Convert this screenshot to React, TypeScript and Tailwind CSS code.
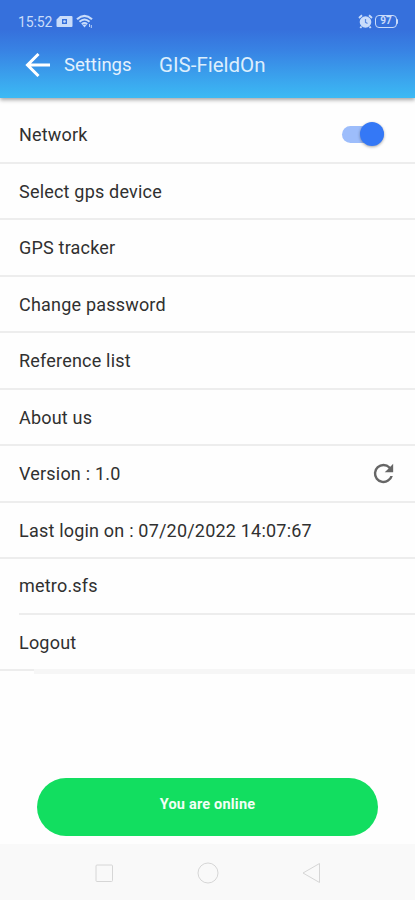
import React from "react";
import clsx from "clsx";

type Row = {
  label: string;
  inset?: boolean;
  last?: boolean;
  icon?: React.ReactNode;
};

const RefreshIcon = () => (
  <svg width="29" height="29" viewBox="0 0 24 24" fill="#666666">
    <path d="M17.65 6.35A7.96 7.96 0 0 0 12 4a8 8 0 1 0 7.73 10h-2.08A6 6 0 1 1 12 6c1.66 0 3.14.69 4.22 1.78L13 11h7V4l-2.35 2.35z" />
  </svg>
);

const rows: Row[] = [
  { label: "Select gps device" },
  { label: "GPS tracker" },
  { label: "Change password" },
  { label: "Reference list" },
  { label: "About us" },
  { label: "Version : 1.0", icon: <RefreshIcon /> },
  { label: "Last login on : 07/20/2022 14:07:67" },
  { label: "metro.sfs", inset: true },
  { label: "Logout", last: true },
];

function StatusBar() {
  return (
    <div className="flex h-[42px] items-center pl-[18px] pr-[17px] text-[#c9dcfa]">
      <span className="pt-px text-[14px] leading-none tracking-[-0.1px]">15:52</span>
      <svg className="ml-[4px]" width="17" height="13" viewBox="0 0 17 13">
        <path
          fill="currentColor"
          fillRule="evenodd"
          d="M4 1h11.500Q16.500 1 16.500 2v9q0 1-1 1h-14q-1 0-1-1V4.500zM6 4v5h5V4z"
        />
        <circle cx="8.500" cy="6.500" r="1.300" fill="currentColor" />
      </svg>
      <svg className="ml-[3px]" width="18" height="15" viewBox="0 0 18 15" fill="none" stroke="currentColor">
        <path d="M1 5.200Q8.500-1.600 16 5.200" strokeWidth="2.200" />
        <path d="M3.500 7.800Q8.500 3.200 13.500 7.800" strokeWidth="2" />
        <path d="M5.800 10.200Q8.500 7.900 11.200 10.200" strokeWidth="2" />
        <path d="M6.500 11l2 2.500L10.500 11q-2-1-4 0z" fill="currentColor" stroke="none" />
        <path d="M13.500 10v3M15.300 11v3" strokeWidth="0.900" />
      </svg>
      <svg className="ml-auto" width="15" height="15" viewBox="0 0 15 15" fill="none">
        <circle cx="7.500" cy="8" r="5.800" fill="currentColor" />
        <path d="M1 4l3-2.700M14 4l-3-2.700M3.500 12.500L2.300 14M11.500 12.500l1.200 1.500" stroke="currentColor" strokeWidth="1.900" />
        <path d="M7.500 5v3.300l2 1.200" stroke="#5c8ae3" strokeWidth="1.200" />
      </svg>
      <div className="ml-[2px] flex h-[13px] w-[22px] items-center justify-center rounded-[4px] border border-[#c9dcfa] text-[10px] leading-none font-bold">
        97
      </div>
      <div className="h-[5px] w-px rounded-r-sm bg-[#c9dcfa]" />
    </div>
  );
}

function Header() {
  return (
    <header className="relative z-10 h-[98px] bg-[linear-gradient(180deg,#3670dc_0%,#3670dc_30%,#3883e4_52%,#3a9fec_76%,#3cbaf4_100%)] shadow-[0_2px_4px_rgba(0,0,0,0.35)]">
      <StatusBar />
      <div className="flex h-[46px] items-center pl-[25px]">
        <svg width="25" height="24" viewBox="0 0 25 24" fill="none" stroke="#fff" strokeWidth="3">
          <path d="M25 12H2.500M13.500 1L2.500 12l11 11" />
        </svg>
        <span className="ml-[14px] w-[95px] pt-[2px] text-[18.500px] text-[#e4f1fd]">Settings</span>
        <span className="text-[20.500px] text-[#dceefd]">GIS-FieldOn</span>
      </div>
    </header>
  );
}

function Toggle() {
  return (
    <div className="flex h-[17px] w-[42px] items-center justify-end rounded-full bg-[#9dbdfb]">
      <div className="size-6 shrink-0 rounded-full bg-[#3478f6] shadow-[0_1px_3px_rgba(0,0,0,0.35)]" />
    </div>
  );
}

export default function App() {
  return (
    <div className="flex h-[900px] w-[415px] flex-col overflow-hidden bg-[#fefefe] font-[Roboto,sans-serif]">
      <Header />

      <main className="flex-1 text-[18px] tracking-[0.2px] text-[#303030]">
        <div className="flex h-[65.500px] items-center justify-between border-b-2 border-[#ededed] pt-[9px] pr-[31.500px] pl-[19px]">
          <span>Network</span>
          <Toggle />
        </div>
        {rows.map((row) => (
          <div key={row.label} className={clsx(row.inset ? "h-[55.500px] pl-[19px]" : "h-[56.500px]")}>
            <div
              className={clsx(
                "flex items-center justify-between pr-[17px]",
                row.last ? "h-[54.500px]" : "h-full border-b-2 border-[#ededed]",
                !row.inset && "pt-px pl-[19px]"
              )}
            >
              <span className="whitespace-nowrap">{row.label}</span>
              {row.icon}
            </div>
            {row.last && (
              <div className="flex items-start">
                <div className="h-[2px] w-[34px] bg-[#ededed]" />
                <div className="h-[5px] flex-1 bg-[#f6f6f6]" />
              </div>
            )}
          </div>
        ))}
      </main>

      {/* connection state */}
      <div className="mx-auto mb-2 flex h-[58px] w-[341px] items-center justify-center rounded-full bg-[#12de60] pb-[5px] text-[14.500px] font-bold tracking-[0.2px] text-[#f2fff6]">
        You are online
      </div>

      <nav className="flex h-[56px] items-center justify-between bg-[#f9f9f9] px-[94px] pt-px text-[#d6d6d6]">
        <svg width="20" height="22" viewBox="0 0 20 22" fill="none" stroke="currentColor">
          <rect x="2" y="3" width="16.500" height="16.500" rx="1" />
        </svg>
        <svg width="22" height="22" viewBox="0 0 22 22" fill="none" stroke="currentColor">
          <circle cx="11" cy="11" r="10" />
        </svg>
        <svg width="20" height="22" viewBox="0 0 20 22" fill="none" stroke="currentColor" strokeLinejoin="round">
          <path d="M18.500 1.500v19L2 11z" />
        </svg>
      </nav>
    </div>
  );
}
